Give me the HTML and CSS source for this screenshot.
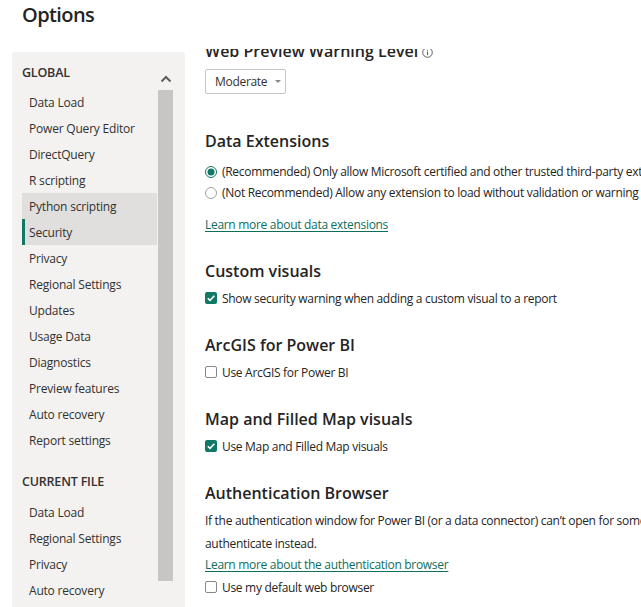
FILE: index.html
```html
<!DOCTYPE html>
<html lang="en">
<head>
<meta charset="utf-8">
<title>Options</title>
<link rel="stylesheet" href="styles.css">
</head>
<body>
<header class="title-bar"><h1 class="title">Options</h1></header>
<div class="main">
  <aside class="sidebar">
    <nav class="nav">
      <div class="group-label">GLOBAL</div>
      <ul class="nav-list">
        <li class="nav-item">Data Load</li>
        <li class="nav-item">Power Query Editor</li>
        <li class="nav-item">DirectQuery</li>
        <li class="nav-item">R scripting</li>
        <li class="nav-item hover">Python scripting</li>
        <li class="nav-item selected">Security</li>
        <li class="nav-item">Privacy</li>
        <li class="nav-item">Regional Settings</li>
        <li class="nav-item">Updates</li>
        <li class="nav-item">Usage Data</li>
        <li class="nav-item">Diagnostics</li>
        <li class="nav-item">Preview features</li>
        <li class="nav-item">Auto recovery</li>
        <li class="nav-item">Report settings</li>
      </ul>
      <div class="group-label group-gap">CURRENT FILE</div>
      <ul class="nav-list">
        <li class="nav-item">Data Load</li>
        <li class="nav-item">Regional Settings</li>
        <li class="nav-item">Privacy</li>
        <li class="nav-item">Auto recovery</li>
      </ul>
    </nav>
    <div class="scroll">
      <svg class="chev" width="12" height="14" viewBox="0 0 12 14"><polyline points="1.5,9.5 6,5 10.5,9.5" fill="none" stroke="#605e5c" stroke-width="2"/></svg>
      <div class="thumb"></div>
    </div>
  </aside>
  <section class="content">
    <div class="section section-top">
      <h2 class="heading heading-first">Web Preview Warning Level
        <svg class="info" width="11" height="11" viewBox="0 0 11 11"><circle cx="5.5" cy="5.5" r="4.8" fill="none" stroke="#605e5c" stroke-width="1"/><rect x="5" y="4.6" width="1" height="3.6" fill="#605e5c"/><rect x="5" y="2.8" width="1" height="1" fill="#605e5c"/></svg>
      </h2>
      <div class="dropdown">Moderate <span class="caret"></span></div>
    </div>

    <div class="section section-ext">
      <h2 class="heading">Data Extensions</h2>
      <div class="radio-group">
        <div class="option radio-row">
          <svg class="radio" width="12" height="12" viewBox="0 0 12 12"><circle cx="6" cy="6" r="5.5" fill="#fff" stroke="#117865" stroke-width="1"/><circle cx="6" cy="6" r="3.5" fill="#117865"/></svg>
          <span>(Recommended) Only allow Microsoft certified and other trusted third-party extensions to load</span>
        </div>
        <div class="option radio-row">
          <svg class="radio" width="12" height="12" viewBox="0 0 12 12"><circle cx="6" cy="6" r="5.5" fill="#fff" stroke="#a19f9d" stroke-width="1"/></svg>
          <span>(Not Recommended) Allow any extension to load without validation or warning</span>
        </div>
      </div>
      <a class="link link-ext" href="#">Learn more about data extensions</a>
    </div>

    <div class="section">
      <h2 class="heading">Custom visuals</h2>
      <div class="option">
        <span class="check checked"><svg width="12" height="12" viewBox="0 0 12 12"><polyline points="2.8,6.2 5,8.4 9.4,3.8" fill="none" stroke="#fff" stroke-width="1.6"/></svg></span>
        <span>Show security warning when adding a custom visual to a report</span>
      </div>
    </div>

    <div class="section">
      <h2 class="heading">ArcGIS for Power BI</h2>
      <div class="option">
        <span class="check"></span>
        <span>Use ArcGIS for Power BI</span>
      </div>
    </div>

    <div class="section">
      <h2 class="heading">Map and Filled Map visuals</h2>
      <div class="option">
        <span class="check checked"><svg width="12" height="12" viewBox="0 0 12 12"><polyline points="2.8,6.2 5,8.4 9.4,3.8" fill="none" stroke="#fff" stroke-width="1.6"/></svg></span>
        <span>Use Map and Filled Map visuals</span>
      </div>
    </div>

    <div class="section">
      <h2 class="heading">Authentication Browser</h2>
      <p class="para">If the authentication window for Power BI (or a data connector) can’t open for some reason, you can use your default web browser to<br>authenticate instead.</p>
      <a class="link link-auth" href="#">Learn more about the authentication browser</a>
      <div class="option option-auth">
        <span class="check"></span>
        <span>Use my default web browser</span>
      </div>
    </div>
  </section>
</div>
</body>
</html>
```

FILE: styles.css
```css
* {
  box-sizing: border-box;
  margin: 0;
  padding: 0;
}

html, body {
  height: 100%;
}

body {
  font-family: "Open Sans", "Liberation Sans", sans-serif;
  color: #252423;
  background: #ffffff;
  overflow: hidden;
}

.title-bar {
  height: 52px;
  padding: 1px 0 0 22px;
}

.title {
  font-size: 20px;
  font-weight: 600;
  line-height: 28px;
  letter-spacing: -0.6px;
  color: #252423;
}

.main {
  display: flex;
  height: calc(100vh - 52px);
}

/* Sidebar */
.sidebar {
  width: 173px;
  flex: none;
  margin-left: 12px;
  background: #f3f2f1;
  border-radius: 4px 4px 0 0;
  display: flex;
  padding: 10px 12px 0 10px;
}

.nav {
  flex: 1;
  min-width: 0;
}

.group-label {
  font-size: 12.5px;
  font-weight: 600;
  line-height: 20px;
  letter-spacing: -0.2px;
  color: #323130;
  padding-top: 1px;
  margin-bottom: 6px;
}

.group-gap {
  margin-top: 18px;
  margin-bottom: 7px;
}

.nav-list {
  list-style: none;
}

.nav-item {
  height: 26px;
  line-height: 25px;
  padding: 1px 0 0 7px;
  font-size: 12px;
  letter-spacing: -0.2px;
  color: #323130;
  white-space: nowrap;
}

.nav-item.hover,
.nav-item.selected {
  background: #e1dfdd;
}

.nav-item.selected {
  box-shadow: inset 3px 0 0 #117865;
}

.scroll {
  width: 15px;
  margin-left: 1px;
  padding-top: 10px;
  display: flex;
  flex-direction: column;
  align-items: center;
}

.chev {
  display: block;
  margin-bottom: 4px;
}

.thumb {
  width: 15px;
  height: 491px;
  background: #c8c6c4;
}

/* Content */
.content {
  flex: 1;
  min-width: 0;
  margin-left: 20px;
  margin-top: -3px;
  overflow: hidden;
  white-space: nowrap;
}

.section {
  margin-bottom: 24px;
}

.section-top {
  margin-bottom: 35px;
}

.section-ext {
  margin-bottom: 23px;
}

.heading {
  display: flex;
  align-items: center;
  gap: 4px;
  height: 24px;
  font-size: 16px;
  font-weight: 600;
  line-height: 24px;
  color: #252423;
  margin-bottom: 4px;
}

.heading-first {
  margin-top: -10px;
  margin-bottom: 6px;
}

.info {
  display: block;
  margin-top: 2px;
}

.dropdown {
  display: inline-flex;
  align-items: center;
  width: 81px;
  height: 25px;
  padding-left: 9px;
  border: 1px solid #c8c6c4;
  border-radius: 2px;
  font-size: 12px;
  letter-spacing: -0.3px;
  color: #323130;
  gap: 8px;
}

.caret {
  width: 0;
  height: 0;
  border-left: 3px solid transparent;
  border-right: 3px solid transparent;
  border-top: 3px solid #8a8886;
}

.radio-group {
  padding-top: 4px;
}

.option {
  display: flex;
  align-items: center;
  gap: 5px;
  height: 22px;
  font-size: 12px;
  letter-spacing: -0.3px;
  color: #252423;
}

.radio-row {
  height: 21px;
}

.radio {
  display: block;
  flex: none;
}

.check {
  display: block;
  flex: none;
  width: 12px;
  height: 12px;
  border: 1px solid #8a8886;
  border-radius: 2px;
  background: #ffffff;
}

.check.checked {
  border: none;
  background: #117865;
}

.check svg {
  display: block;
}

.link {
  display: block;
  width: max-content;
  font-size: 12px;
  letter-spacing: -0.3px;
  color: #0e6e5c;
  text-decoration: underline;
  text-underline-offset: 2px;
}

.link-ext {
  margin-top: 11px;
  line-height: 22px;
}

.para {
  margin-top: 3px;
  font-size: 12px;
  letter-spacing: -0.3px;
  line-height: 23px;
  color: #252423;
}

.link-auth {
  line-height: 20px;
}

.option-auth {
  margin-top: 1px;
}
```
